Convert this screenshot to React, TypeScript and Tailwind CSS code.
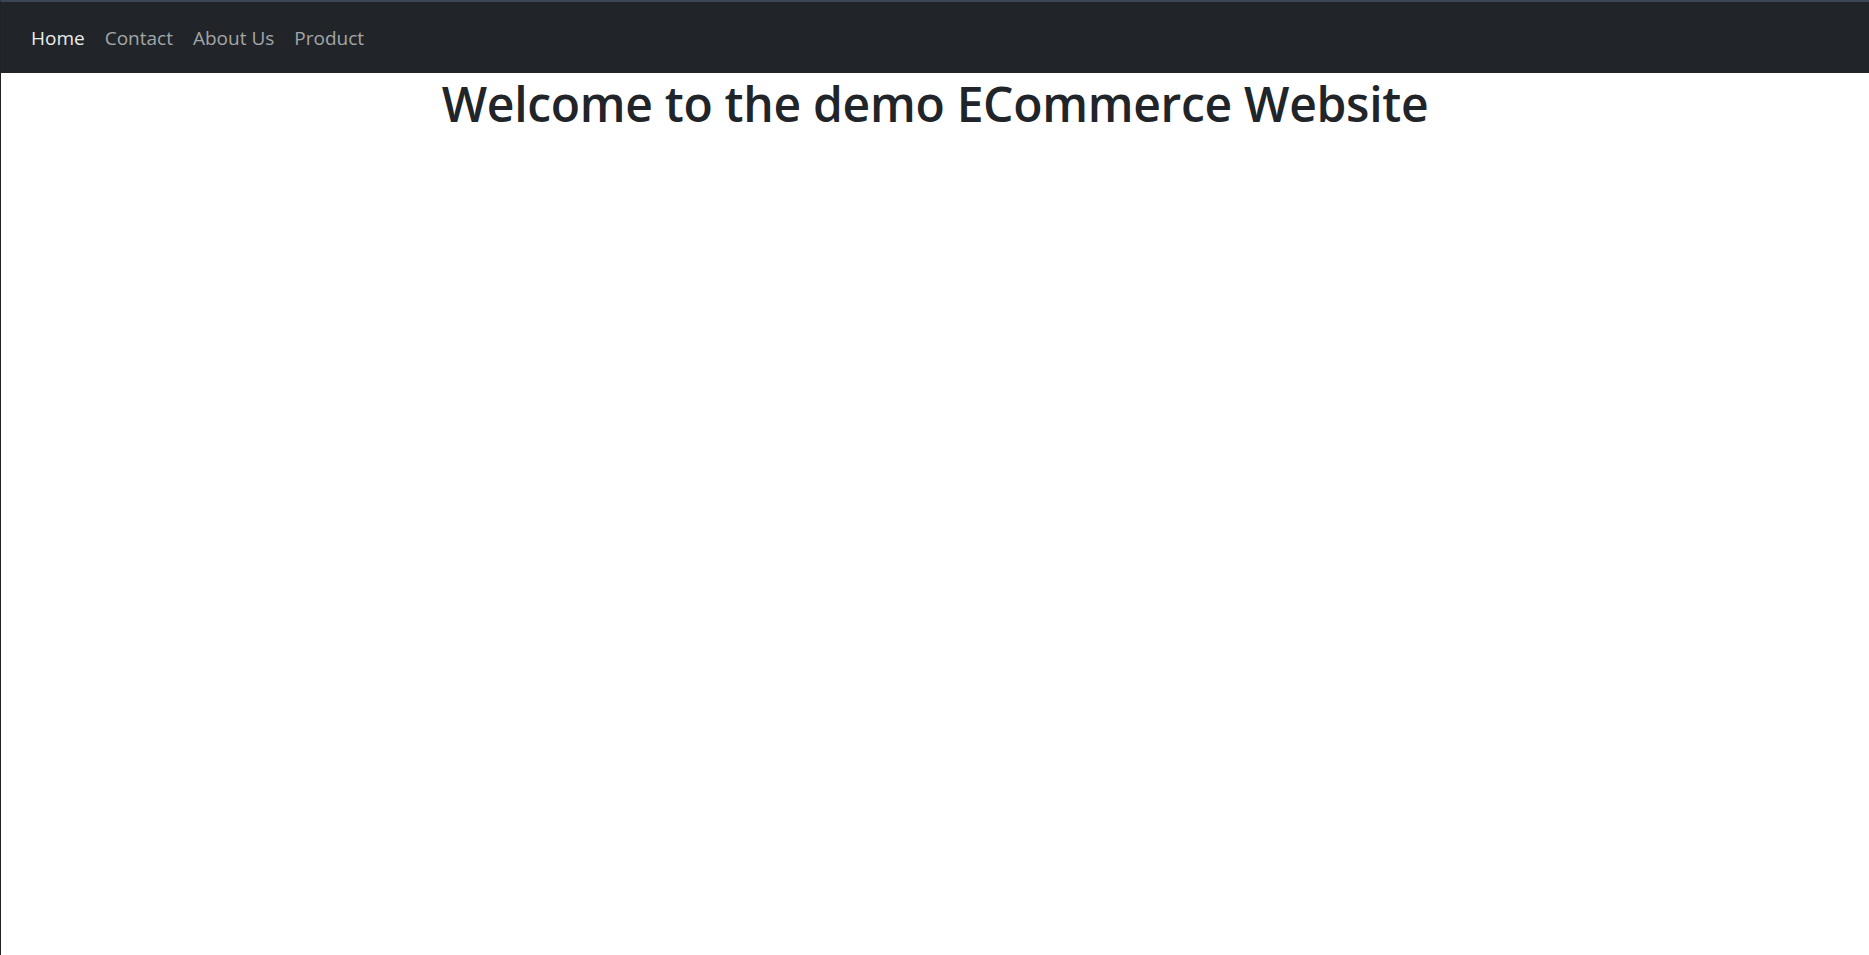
import React from "react";

export default function App() {
  const links = ["Home", "Contact", "About Us", "Product"];
  return (
    <div
      className="min-h-screen bg-white border-l border-[#1f2328] border-t-2 border-t-[#3b4654]"
      style={{ fontFamily: '"Open Sans", "Noto Sans", sans-serif' }}
    >
      <nav className="bg-[#212529] h-[71px] flex items-center pl-[20px]">
        <ul className="flex items-center">
          {links.map((l, i) => (
            <li key={l}>
              <a
                href="#"
                className={
                  "px-[10px] text-[19px] leading-[30px] " +
                  (i === 0 ? "text-[#ececec]" : "text-[#a3a5a8]")
                }
              >
                {l}
              </a>
            </li>
          ))}
        </ul>
      </nav>
      <h1 className="text-center text-[#212529] text-[48px] font-semibold leading-[60px] mt-[1px] tracking-[-0.3px]">
        Welcome to the demo ECommerce Website
      </h1>
    </div>
  );
}
